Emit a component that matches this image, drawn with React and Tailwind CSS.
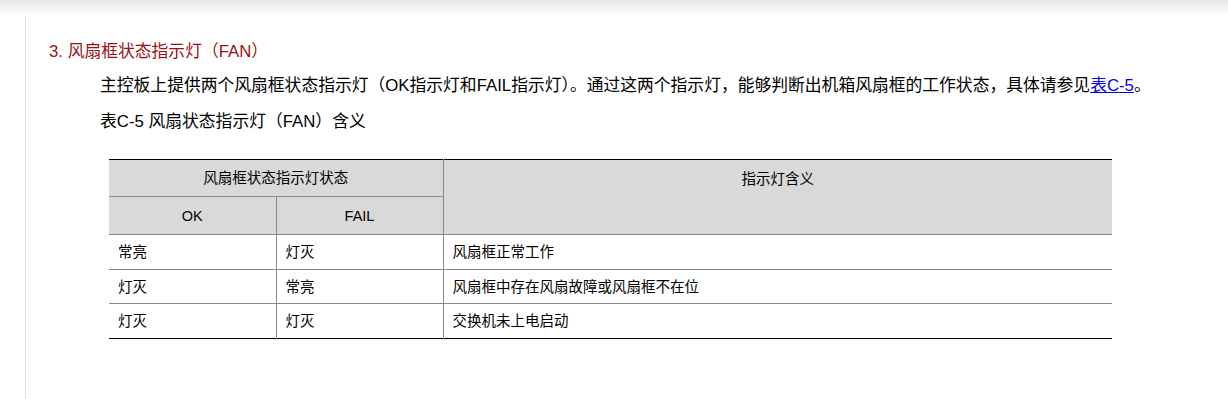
const rows = [
  ['常亮', '灯灭', '风扇框正常工作'],
  ['灯灭', '常亮', '风扇框中存在风扇故障或风扇框不在位'],
  ['灯灭', '灯灭', '交换机未上电启动'],
];

const App = () => {
  return (
    <div
      className="relative h-[399px] w-[1228px] overflow-hidden bg-white text-black"
      style={{ fontFamily: '"Liberation Sans", "Noto Sans CJK SC", sans-serif' }}
    >
      {/* top shadow of the header bar */}
      <div className="absolute inset-x-0 top-0 h-[16px] bg-gradient-to-b from-[#e6e6e6] to-white" />

      <div className="flex h-full">
        <div className="w-[26px] shrink-0 border-r border-[#e3e3e3]" />

        <div className="flex-1 pt-[42px]">
          <h3 className="ml-[23px] text-[16.8px] leading-[20px] font-normal text-[#9b1111]">
            3. 风扇框状态指示灯（FAN）
          </h3>

          <div className="ml-[74px] mt-[14px] text-[16.8px] leading-[20px]">
            <p>
              主控板上提供两个风扇框状态指示灯（OK指示灯和FAIL指示灯）。通过这两个指示灯，能够判断出机箱风扇框的工作状态，具体请参见
              <a href="#" className="text-[#0000ee] underline">表C-5</a>。
            </p>
            <p className="mt-[16px]">表C-5 风扇状态指示灯（FAN）含义</p>
          </div>

          <table className="ml-[83px] mt-[27px] w-[1003px] border-collapse text-[14.5px] leading-[18px]">
            <colgroup>
              <col className="w-[167px]" />
              <col className="w-[167px]" />
              <col />
            </colgroup>
            <thead className="bg-[#d9d9d9]">
              <tr className="h-[37px] border-t border-black">
                <th colSpan={2} className="border-b border-r border-[#8a8a8a] font-normal">
                  风扇框状态指示灯状态
                </th>
                <th rowSpan={2} className="border-b border-[#8a8a8a] pt-[10px] align-top font-normal">
                  指示灯含义
                </th>
              </tr>
              <tr className="h-[38px]">
                <th className="border-b border-r border-[#8a8a8a] font-normal">OK</th>
                <th className="border-b border-r border-[#8a8a8a] font-normal">FAIL</th>
              </tr>
            </thead>
            <tbody>
              {rows.map((r, i) => (
                <tr
                  key={i}
                  className={
                    i === rows.length - 1
                      ? 'h-[35px] border-b border-black'
                      : i === 1
                        ? 'h-[34px] border-b border-[#8a8a8a]'
                        : 'h-[35px] border-b border-[#8a8a8a]'
                  }
                >
                  <td className="border-r border-[#8a8a8a] pl-[9px]">{r[0]}</td>
                  <td className="border-r border-[#8a8a8a] pl-[9px]">{r[1]}</td>
                  <td className="pl-[9px]">{r[2]}</td>
                </tr>
              ))}
            </tbody>
          </table>
        </div>
      </div>
    </div>
  );
};

export default App;
